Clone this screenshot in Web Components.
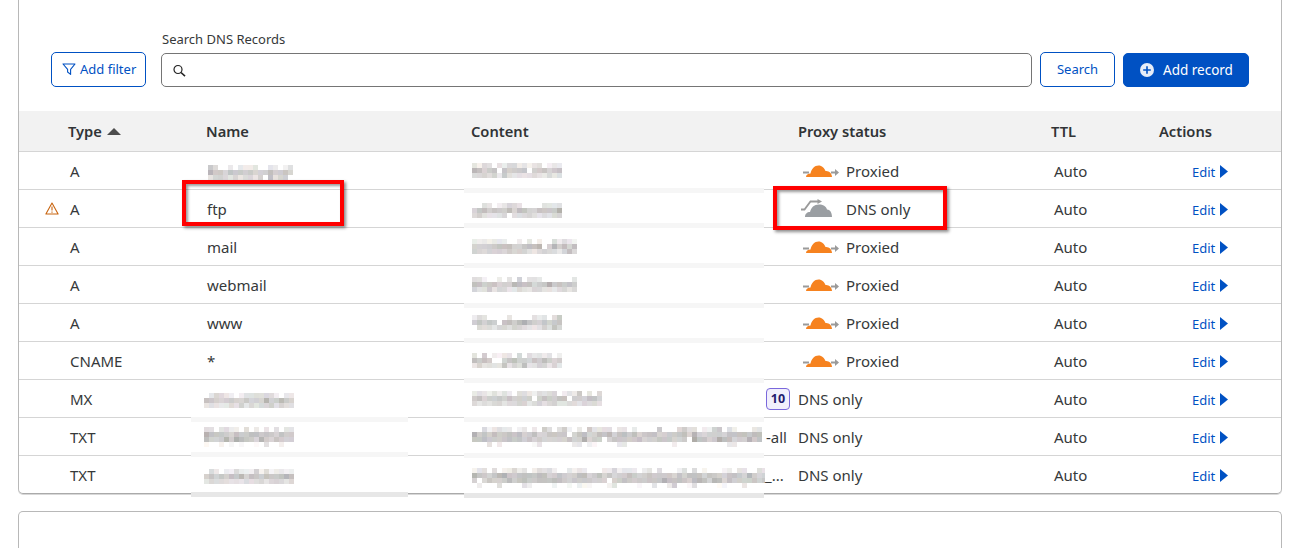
<!DOCTYPE html>
<html>
<head>
<meta charset="utf-8">
<style>
html, body { margin: 0; height: 548px; overflow: hidden; background: #fff; }
body { font-family: "Noto Sans", "Liberation Sans", sans-serif; color: #36393a; }
</style>
</head>
<body>
<dns-page>
  <dns-card>
    <dns-toolbar></dns-toolbar>
    <table-head></table-head>
    <record-row type="A"><blur-text slot="name" w="85" h="15" seed="3" style="margin-left:1px"></blur-text><blur-text slot="content" w="90" h="15" seed="11"></blur-text><proxy-status proxied></proxy-status></record-row>
    <record-row type="A" warn><span slot="name">ftp</span><blur-text slot="content" w="90" h="15" seed="12" style="margin-top:3px"></blur-text><proxy-status dns></proxy-status></record-row>
    <record-row type="A"><span slot="name">mail</span><blur-text slot="content" w="105" h="15" seed="13"></blur-text><proxy-status proxied></proxy-status></record-row>
    <record-row type="A"><span slot="name">webmail</span><blur-text slot="content" w="105" h="15" seed="14"></blur-text><proxy-status proxied></proxy-status></record-row>
    <record-row type="A"><span slot="name">www</span><blur-text slot="content" w="90" h="15" seed="15"></blur-text><proxy-status proxied></proxy-status></record-row>
    <record-row type="CNAME"><span slot="name">*</span><blur-text slot="content" w="90" h="15" seed="16"></blur-text><proxy-status proxied></proxy-status></record-row>
    <record-row type="MX"><blur-text slot="name" w="90" h="15" seed="4" style="margin-left:-3px"></blur-text><blur-text slot="content" w="130" h="15" seed="17"></blur-text><priority-badge slot="content">10</priority-badge><proxy-status></proxy-status></record-row>
    <record-row type="TXT"><blur-text slot="name" w="90" h="20" seed="5" style="margin-left:-3px"></blur-text><blur-text slot="content" w="290" h="20" seed="18"></blur-text><span slot="content" class="tail">&nbsp;-all</span><proxy-status></proxy-status></record-row>
    <record-row type="TXT" last><blur-text slot="name" w="90" h="15" seed="6" style="margin-left:-3px"></blur-text><blur-text slot="content" w="293" h="20" seed="19" style="margin-top:7px"></blur-text><span slot="content" class="tail">_...</span><proxy-status></proxy-status></record-row>
  </dns-card>
  <dns-card empty></dns-card>

  <!-- redaction leftovers sitting over the row lines -->
  <patch-strip x="464" y="188"></patch-strip>
  <patch-strip x="464" y="223"></patch-strip>
  <patch-strip x="464" y="263"></patch-strip>
  <patch-strip x="464" y="303"></patch-strip>
  <patch-strip x="464" y="338"></patch-strip>
  <patch-strip x="464" y="378"></patch-strip>
  <patch-strip x="464" y="417"></patch-strip>
  <patch-strip x="464" y="453"></patch-strip>
  <patch-strip x="464" y="493" dark></patch-strip>
  <patch-strip x="191" y="417" w="217"></patch-strip>
  <patch-strip x="191" y="452" w="217"></patch-strip>
  <patch-strip x="191" y="492" w="217" dark></patch-strip>

  <call-out x="182" y="180" w="162" h="46"></call-out>
  <call-out x="773" y="186" w="174" h="44"></call-out>
</dns-page>

<script>
class DnsPage extends HTMLElement {
    constructor() {
        super();
        this.attachShadow({ mode: 'open' });
        this.shadowRoot.innerHTML = `
            <style>
                :host {
                    display: flex;
                    flex-direction: column;
                    gap: 17px;
                    position: relative;
                    padding: 0 25px 0 18px;
                }
            </style>
            <slot></slot>
        `;
    }
}

class DnsCard extends HTMLElement {
    constructor() {
        super();
        this.attachShadow({ mode: 'open' });
        this.shadowRoot.innerHTML = `
            <style>
                :host {
                    display: block;
                    border: 1px solid #b8b8b8;
                    border-top: 0;
                    border-bottom-color: #aaa;
                    border-radius: 0 0 5px 5px;
                    box-shadow: 0 1px 0 #d8d8d8;
                }
                :host([empty]) {
                    height: 60px;
                    border-top: 1px solid #b8b8b8;
                    border-bottom: 0;
                    border-radius: 5px 5px 0 0;
                    box-shadow: none;
                }
            </style>
            <slot></slot>
        `;
    }
}

class DnsToolbar extends HTMLElement {
    constructor() {
        super();
        this.attachShadow({ mode: 'open' });
        this.shadowRoot.innerHTML = `
            <style>
                :host {
                    display: flex;
                    align-items: flex-end;
                    padding: 31px 32px 24px;
                    font-size: 13px;
                }
                button {
                    font: inherit;
                    height: 35px;
                    border: 1px solid #0051c3;
                    border-radius: 5px;
                    background: #fff;
                    color: #0051c3;
                    display: flex;
                    align-items: center;
                    padding: 0 0 2px;
                    box-sizing: border-box;
                }
                .filter { width: 95px; padding-left: 10px; gap: 4px; margin-right: 15px; }
                .search { width: 75px; justify-content: center; margin: 0 8px; }
                .add {
                    width: 126px;
                    height: 34px;
                    background: #0051c3;
                    color: #fff;
                    padding: 0 0 0 16px;
                    gap: 9px;
                    font-size: 13.5px;
                }
                .field { flex: 1; display: flex; flex-direction: column; gap: 5px; }
                label { padding-left: 1px; line-height: 17px; color: #36393a; }
                .input {
                    height: 34px;
                    box-sizing: border-box;
                    border: 1px solid #757575;
                    border-radius: 5px;
                    display: flex;
                    align-items: center;
                    padding-left: 10px;
                }
            </style>
            <button class="filter">
                <svg width="14" height="14" viewBox="0 0 14 14" fill="none" stroke="#0051c3" stroke-width="1.1">
                    <path d="M1 2h12L8.600 7.400v5L5.600 10V7.400z" stroke-linejoin="round"/>
                </svg>
                Add filter
            </button>
            <div class="field">
                <label>Search DNS Records</label>
                <div class="input">
                    <svg width="15" height="15" viewBox="0 0 15 15" fill="none" stroke="#222" stroke-width="1.2">
                        <circle cx="6" cy="6.500" r="4"/><path d="M9 9.500l4 3.600" stroke-width="1.6"/>
                    </svg>
                </div>
            </div>
            <button class="search">Search</button>
            <button class="add">
                <svg width="14" height="14" viewBox="0 0 14 14">
                    <circle cx="7" cy="7" r="7" fill="#e6edf8"/>
                    <path d="M7 3.200v7.600M3.200 7h7.600" stroke="#0051c3" stroke-width="1.6"/>
                </svg>
                Add record
            </button>
        `;
    }
}

class TableHead extends HTMLElement {
    constructor() {
        super();
        this.attachShadow({ mode: 'open' });
        this.shadowRoot.innerHTML = `
            <style>
                :host {
                    display: grid;
                    grid-template-columns: 138px 265px 327px 253px 108px 1fr;
                    align-items: center;
                    height: 40px;
                    padding-left: 49px;
                    background: #f2f2f2;
                    border-bottom: 1px solid #d5d5d5;
                    font-size: 14.7px;
                    font-weight: 600;
                    color: #313436;
                }
                .sort { display: inline-block; margin-left: 5px; vertical-align: 2px; }
            </style>
            <div>Type<svg class="sort" width="14" height="7" viewBox="0 0 14 7"><path d="M7 0l7 7H0z" fill="#4d4d4d"/></svg></div>
            <div>Name</div>
            <div>Content</div>
            <div>Proxy status</div>
            <div>TTL</div>
            <div>Actions</div>
        `;
    }
}

class RecordRow extends HTMLElement {
    constructor() {
        super();
        this.attachShadow({ mode: 'open' });
    }

    connectedCallback() {
        this.render();
    }

    render() {
        const warn = this.hasAttribute('warn') ? `
            <svg width="14" height="13" viewBox="0 0 14 13" fill="none" stroke="#c8640f" stroke-width="1.1">
                <path d="M7 1L.9 12h12.200z" stroke-linejoin="round"/>
                <path d="M7 4.500v4M7 9.400v1.400"/>
            </svg>` : '';
        this.shadowRoot.innerHTML = `
            <style>
                :host {
                    display: grid;
                    grid-template-columns: 51px 137px 264px 327px 256px 138px 1fr;
                    align-items: center;
                    height: 37px;
                    border-bottom: 1px solid #d5d5d5;
                    font-size: 15px;
                    white-space: nowrap;
                }
                :host([last]) { border-bottom: 0; }
                .lead { padding-left: 26px; display: flex; align-items: center; }
                .content { display: flex; align-items: center; padding-left: 1px; }
                .edit {
                    display: flex;
                    align-items: center;
                    gap: 5px;
                    padding-top: 2px;
                    color: #0051c3;
                    font-size: 13px;
                }
            </style>
            <div class="lead">${warn}</div>
            <div>${this.getAttribute('type')}</div>
            <div><slot name="name"></slot></div>
            <div class="content"><slot name="content"></slot></div>
            <div><slot></slot></div>
            <div>Auto</div>
            <div class="edit">Edit<svg width="8" height="13" viewBox="0 0 8 13"><path d="M0 0l8 6.500L0 13z" fill="#0051c3"/></svg></div>
        `;
    }
}

class ProxyStatus extends HTMLElement {
    constructor() {
        super();
        this.attachShadow({ mode: 'open' });
    }

    connectedCallback() {
        this.render();
    }

    render() {
        let icon = '';
        let label = 'DNS only';
        if (this.hasAttribute('proxied')) {
            label = 'Proxied';
            icon = `
                <svg width="40" height="14" viewBox="0 0 40 14">
                    <path d="M3 8.500h6M31 8.500h6" stroke="#9a9a9a" stroke-width="2"/>
                    <path d="M35 5l4 3.500-4 3.500z" fill="#9a9a9a"/>
                    <path d="M6 13C6 11 8 9.500 10.500 9.500C11.500 5 14.500 1.500 18.500 1.500C22 1.500 24.500 4 25.500 7C29 6.500 32 9.500 32 13Z" fill="#f6821f"/>
                </svg>`;
        } else if (this.hasAttribute('dns')) {
            icon = `
                <svg width="40" height="22" viewBox="0 0 40 22">
                    <path d="M1 11.500h3.500L10.500 3.500h8" fill="none" stroke="#9a9a9a" stroke-width="1.8"/>
                    <path d="M17.500 1l4.500 2.500-4.500 2.500z" fill="#9a9a9a"/>
                    <path d="M5 19C5 16 7 14 10 14C11 9.500 14 6.500 19 6.500C23 6.500 26 8 27 11.500C30 11.500 32 14.500 32 19Z" fill="#9a9ea2"/>
                </svg>`;
        }
        this.shadowRoot.innerHTML = `
            <style>
                :host { display: flex; align-items: center; gap: 6px; }
                svg { flex: none; margin-left: 2px; }
            </style>
            ${icon}<span>${label}</span>
        `;
    }
}

class PriorityBadge extends HTMLElement {
    constructor() {
        super();
        this.attachShadow({ mode: 'open' });
        this.shadowRoot.innerHTML = `
            <style>
                :host {
                    display: flex;
                    align-items: center;
                    justify-content: center;
                    box-sizing: border-box;
                    width: 24px;
                    height: 22px;
                    margin-left: auto;
                    margin-right: 8px;
                    border: 1px solid #7a68dc;
                    border-radius: 4px;
                    background: #f1effc;
                    color: #231a6e;
                    font-size: 12.5px;
                    font-weight: 700;
                }
            </style>
            <slot></slot>
        `;
    }
}

// the pixelated mosaic that hides the real values
class BlurText extends HTMLElement {
    constructor() {
        super();
        this.attachShadow({ mode: 'open' });
    }

    connectedCallback() {
        this.render();
    }

    render() {
        const w = +this.getAttribute('w');
        const h = +this.getAttribute('h');
        let seed = +this.getAttribute('seed') * 7919 + 13;
        const rnd = () => {
            seed = (seed * 16807) % 2147483647;
            return (seed % 1000) / 1000;
        };
        const rows = h / 5;
        let rects = '';
        for (let row = 0; row < rows; row++) {
            const top = row === 0;
            const tail = rows > 3 && row === rows - 1;
            const gap = top ? 0.3 : tail ? 0.7 : 0.02;
            const light = top ? 218 : tail ? 226 : row === rows - 1 ? 208 : 190;
            for (let x = 0; x < w; x += 5) {
                if (rnd() < gap) continue;
                const base = light + rnd() * 24 - (rnd() < 0.1 ? 20 : 0);
                const r = Math.round(base + rnd() * 10 - 3);
                const g = Math.round(base + rnd() * 6 - 3);
                const b = Math.round(base + rnd() * 10 - 5);
                rects += `<rect x="${x}" y="${row * 5}" width="5" height="5" fill="rgb(${r},${g},${b})"/>`;
            }
        }
        this.shadowRoot.innerHTML = `
            <style>:host { display: inline-flex; vertical-align: middle; flex: none; } svg { display: block; }</style>
            <svg width="${w}" height="${h}" shape-rendering="crispEdges">${rects}</svg>
        `;
    }
}

class PatchStrip extends HTMLElement {
    constructor() {
        super();
        this.attachShadow({ mode: 'open' });
        this.shadowRoot.innerHTML = `
            <style>
                :host { position: absolute; display: block; height: 5px; background: #f6f6f6; }
                :host([dark]) { background: #e7e7e7; }
            </style>
        `;
    }

    connectedCallback() {
        this.style.left = this.getAttribute('x') + 'px';
        this.style.top = this.getAttribute('y') + 'px';
        this.style.width = (this.getAttribute('w') || 300) + 'px';
    }
}

class CallOut extends HTMLElement {
    constructor() {
        super();
        this.attachShadow({ mode: 'open' });
        this.shadowRoot.innerHTML = `
            <style>
                :host {
                    position: absolute;
                    display: block;
                    box-sizing: border-box;
                    border: 4px solid #f00;
                    box-shadow: 2px 2px 3px rgba(0,0,0,.45), inset 2px 2px 3px rgba(0,0,0,.4);
                }
            </style>
        `;
    }

    connectedCallback() {
        this.style.left = this.getAttribute('x') + 'px';
        this.style.top = this.getAttribute('y') + 'px';
        this.style.width = this.getAttribute('w') + 'px';
        this.style.height = this.getAttribute('h') + 'px';
    }
}

customElements.define('dns-page', DnsPage);
customElements.define('dns-card', DnsCard);
customElements.define('dns-toolbar', DnsToolbar);
customElements.define('table-head', TableHead);
customElements.define('record-row', RecordRow);
customElements.define('proxy-status', ProxyStatus);
customElements.define('priority-badge', PriorityBadge);
customElements.define('blur-text', BlurText);
customElements.define('patch-strip', PatchStrip);
customElements.define('call-out', CallOut);
</script>
</body>
</html>
